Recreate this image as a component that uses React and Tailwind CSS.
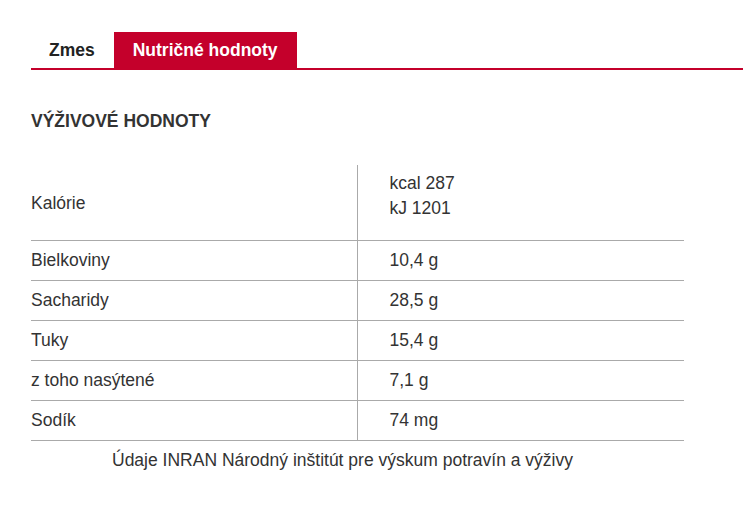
import React from "react";

const rows = [
  ["Bielkoviny", "10,4 g"],
  ["Sacharidy", "28,5 g"],
  ["Tuky", "15,4 g"],
  ["z toho nasýtené", "7,1 g"],
  ["Sodík", "74 mg"],
];

function App() {
  return (
    <div className="min-h-screen bg-white pl-[31px] pt-[32px] text-[#333] text-[17.5px] font-['Liberation_Sans',Arial,sans-serif]">
      <div className="flex border-b-2 border-[#c4002b]">
        <button className="h-[36px] pl-[18px] pr-[19px] font-bold text-[#222]">Zmes</button>
        <button className="h-[36px] px-[19px] bg-[#c4002b] font-bold text-white">
          Nutričné hodnoty
        </button>
      </div>

      <h2 className="mt-[41px] font-bold leading-[20px]">VÝŽIVOVÉ HODNOTY</h2>

      <table className="mt-[34px] w-[653px] border-collapse">
        <tbody>
          <tr className="h-[75px] border-b border-[#aaa]">
            <td className="w-[326px] border-r border-[#aaa] p-0 pt-[2px]">Kalórie</td>
            <td className="pl-[32px] leading-[25px] pb-[12px]">
              kcal 287
              <br />
              kJ 1201
            </td>
          </tr>
          {rows.map(([name, value]) => (
            <tr key={name} className="h-[40px] border-b border-[#aaa]">
              <td className="border-r border-[#aaa] p-0">{name}</td>
              <td className="pl-[32px]">{value}</td>
            </tr>
          ))}
        </tbody>
      </table>

      <p className="mt-[8px] pl-[81px] leading-[22px]">
        Údaje INRAN Národný inštitút pre výskum potravín a výživy
      </p>
    </div>
  );
}

export default App;
